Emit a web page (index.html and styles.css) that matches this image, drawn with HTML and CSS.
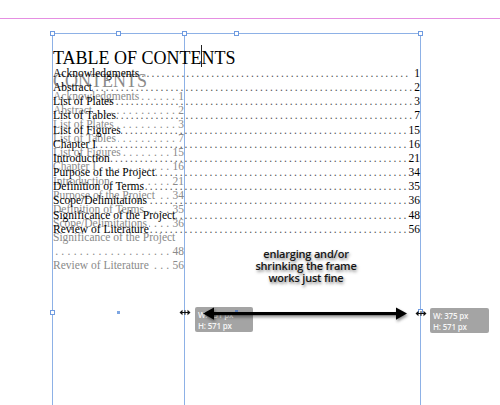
FILE: index.html
```html
<!DOCTYPE html>
<html>
<head>
<meta charset="utf-8">
<link rel="stylesheet" href="styles.css">
</head>
<body>
<div class="canvas">
  <div class="guide"></div>

  <div class="frame frame-narrow">
    <div class="toc toc-ghost">
      <div class="toc-title">CONTENTS</div>
      <div class="toc-row"><span class="toc-label">Acknowledgments</span><span class="toc-leader"><span>..............................</span></span><span class="toc-page">1</span></div>
      <div class="toc-row"><span class="toc-label">Abstract</span><span class="toc-leader"><span>..............................</span></span><span class="toc-page">2</span></div>
      <div class="toc-row"><span class="toc-label">List of Plates</span><span class="toc-leader"><span>..............................</span></span><span class="toc-page">3</span></div>
      <div class="toc-row"><span class="toc-label">List of Tables</span><span class="toc-leader"><span>..............................</span></span><span class="toc-page">7</span></div>
      <div class="toc-row"><span class="toc-label">List of Figures</span><span class="toc-leader"><span>..............................</span></span><span class="toc-page">15</span></div>
      <div class="toc-row"><span class="toc-label">Chapter I</span><span class="toc-leader"><span>..............................</span></span><span class="toc-page">16</span></div>
      <div class="toc-row"><span class="toc-label">Introduction</span><span class="toc-leader"><span>..............................</span></span><span class="toc-page">21</span></div>
      <div class="toc-row"><span class="toc-label">Purpose of the Project</span><span class="toc-leader"><span>..............................</span></span><span class="toc-page">34</span></div>
      <div class="toc-row"><span class="toc-label">Definition of Terms</span><span class="toc-leader"><span>..............................</span></span><span class="toc-page">35</span></div>
      <div class="toc-row"><span class="toc-label">Scope/Delimitations</span><span class="toc-leader"><span>..............................</span></span><span class="toc-page">36</span></div>
      <div class="toc-row"><span class="toc-label">Significance of the Project</span></div>
      <div class="toc-row"><span class="toc-leader toc-leader-full"><span>..............................</span></span><span class="toc-page">48</span></div>
      <div class="toc-row"><span class="toc-label">Review of Literature</span><span class="toc-leader"><span>..............................</span></span><span class="toc-page">56</span></div>
    </div>
  </div>

  <div class="frame frame-wide">
    <div class="toc toc-main">
      <div class="toc-title">TABLE OF CONTENTS</div>
      <div class="toc-row"><span class="toc-label">Acknowledgments</span><span class="toc-leader toc-leader-gap"><span>................................................................................</span></span><span class="toc-page">1</span></div>
      <div class="toc-row"><span class="toc-label">Abstract</span><span class="toc-leader"><span>................................................................................</span></span><span class="toc-page">2</span></div>
      <div class="toc-row"><span class="toc-label">List of Plates</span><span class="toc-leader"><span>................................................................................</span></span><span class="toc-page">3</span></div>
      <div class="toc-row"><span class="toc-label">List of Tables</span><span class="toc-leader"><span>................................................................................</span></span><span class="toc-page">7</span></div>
      <div class="toc-row"><span class="toc-label">List of Figures</span><span class="toc-leader"><span>................................................................................</span></span><span class="toc-page">15</span></div>
      <div class="toc-row"><span class="toc-label">Chapter I</span><span class="toc-leader"><span>................................................................................</span></span><span class="toc-page">16</span></div>
      <div class="toc-row"><span class="toc-label">Introduction</span><span class="toc-leader"><span>................................................................................</span></span><span class="toc-page">21</span></div>
      <div class="toc-row"><span class="toc-label">Purpose of the Project</span><span class="toc-leader"><span>................................................................................</span></span><span class="toc-page">34</span></div>
      <div class="toc-row"><span class="toc-label">Definition of Terms</span><span class="toc-leader"><span>................................................................................</span></span><span class="toc-page">35</span></div>
      <div class="toc-row"><span class="toc-label">Scope/Delimitations</span><span class="toc-leader"><span>................................................................................</span></span><span class="toc-page">36</span></div>
      <div class="toc-row"><span class="toc-label">Significance of the Project</span><span class="toc-leader"><span>................................................................................</span></span><span class="toc-page">48</span></div>
      <div class="toc-row"><span class="toc-label">Review of Literature</span><span class="toc-leader"><span>................................................................................</span></span><span class="toc-page">56</span></div>
    </div>
  </div>

  <div class="caret"></div>

  <span class="handle handle-hollow h-tl"></span>
  <span class="handle handle-hollow h-tm1"></span>
  <span class="handle handle-hollow h-tr1"></span>
  <span class="handle handle-hollow h-tm2"></span>
  <span class="handle handle-hollow h-tr2"></span>
  <span class="handle handle-hollow h-ml"></span>
  <span class="handle handle-hollow h-mr2"></span>
  <span class="handle handle-solid h-mm1"></span>

  <div class="tip tip-left"><div>W: 131 px</div><div>H: 571 px</div></div>
  <span class="handle handle-solid h-mm2"></span>
  <div class="tip tip-right"><div>W: 375 px</div><div>H: 571 px</div></div>

  <svg class="cursor cursor-left" width="12" height="7" viewBox="0 0 12 7">
    <path d="M0.5 3.5 L3.5 0.8 V6.2 Z M11.5 3.5 L8.5 0.8 V6.2 Z" fill="#111"/>
    <path d="M2 3.5 H10 M6 1.2 V5.8" stroke="#111" stroke-width="1"/>
  </svg>
  <svg class="cursor cursor-right" width="12" height="7" viewBox="0 0 12 7">
    <path d="M0.5 3.5 L3.5 0.8 V6.2 Z M11.5 3.5 L8.5 0.8 V6.2 Z" fill="#111"/>
    <path d="M2 3.5 H10 M6 1.2 V5.8" stroke="#111" stroke-width="1"/>
  </svg>

  <svg class="arrow" width="212" height="22" viewBox="0 0 212 22">
    <rect x="12" y="9" width="186" height="3.2" fill="#000"/>
    <polygon points="3,10.6 14,4.5 14,16.7" fill="#000"/>
    <polygon points="207,10.6 196,4.5 196,16.7" fill="#000"/>
  </svg>

  <div class="note">enlarging and/or<br>shrinking the frame<br>works just fine</div>
</div>
</body>
</html>
```

FILE: styles.css
```css
html, body {
  margin: 0;
  padding: 0;
  background: #ffffff;
}

.canvas {
  position: relative;
  width: 500px;
  height: 405px;
  overflow: hidden;
  background: #ffffff;
}

.guide {
  position: absolute;
  left: 0;
  top: 18px;
  width: 500px;
  height: 1px;
  background: #e58fe2;
}

.frame {
  position: absolute;
  top: 33px;
  left: 52px;
  height: 420px;
  box-sizing: border-box;
  border: 1px solid #8db1e6;
  border-bottom: none;
}

.frame-wide {
  width: 369px;
  padding-top: 16px;
}

.frame-narrow {
  width: 133px;
  padding-top: 39px;
  border-left-color: #6f97dc;
}

.toc {
  font-family: "Liberation Serif", "Times New Roman", serif;
  font-size: 11.5px;
}

.toc-main {
  color: #000000;
  line-height: 14.16px;
}

.toc-ghost {
  color: #8a8a8a;
  line-height: 14.1px;
}

.toc-title {
  font-size: 18px;
  line-height: 16px;
  white-space: nowrap;
}

.toc-row {
  display: flex;
  white-space: nowrap;
}

.toc-label {
  flex: none;
}

.toc-leader {
  flex: 1 1 0;
  min-width: 0;
  overflow: hidden;
  display: flex;
  justify-content: flex-end;
}

.toc-main .toc-leader {
  letter-spacing: 2.1px;
  color: #555555;
}

.toc-ghost .toc-leader {
  letter-spacing: 3.3px;
  margin-left: 2px;
}

.toc-leader-gap {
  margin-right: 4px;
}

.toc-leader-full {
  margin-left: 0;
}

.toc-page {
  flex: none;
}

.caret {
  position: absolute;
  left: 201px;
  top: 45px;
  width: 1px;
  height: 22px;
  background: #222222;
}

.handle {
  position: absolute;
  box-sizing: border-box;
}

.handle-hollow {
  width: 5px;
  height: 5px;
  border: 1px solid #6f9be0;
  background: #ffffff;
}

.handle-solid {
  width: 3px;
  height: 3px;
  background: #7ea6e2;
}

.h-tl { left: 50px; top: 31px; }
.h-tm1 { left: 116px; top: 31px; }
.h-tr1 { left: 182px; top: 31px; }
.h-tm2 { left: 234px; top: 31px; }
.h-tr2 { left: 418px; top: 31px; }
.h-ml { left: 50px; top: 310px; }
.h-mr2 { left: 418px; top: 309px; }
.h-mm1 { left: 117px; top: 311px; }
.h-mm2 { left: 235px; top: 310px; background: #5f7fb8; }

.tip {
  position: absolute;
  box-sizing: border-box;
  width: 58px;
  height: 25px;
  padding: 3px 0 0 3px;
  background: #a4a4a4;
  border-radius: 2px;
  color: #f6f6f6;
  font-family: "Open Sans", "Liberation Sans", sans-serif;
  font-size: 8px;
  font-weight: 600;
  line-height: 10.5px;
  letter-spacing: -0.2px;
}

.tip-left { left: 195px; top: 307px; }
.tip-right { left: 430px; top: 308px; width: 59px; }

.cursor {
  position: absolute;
  display: block;
}

.cursor-left { left: 179px; top: 309px; }
.cursor-right { left: 415px; top: 310px; }

.arrow {
  position: absolute;
  left: 200px;
  top: 303px;
  display: block;
  filter: drop-shadow(1px 2px 1.5px rgba(0, 0, 0, 0.45));
}

.note {
  position: absolute;
  left: 236px;
  top: 248px;
  width: 140px;
  text-align: center;
  font-family: "Open Sans", "Liberation Sans", sans-serif;
  font-size: 11px;
  font-weight: 600;
  letter-spacing: -0.2px;
  line-height: 12px;
  color: #151515;
  text-shadow: 1px 2px 3px rgba(0, 0, 0, 0.5);
}
```
